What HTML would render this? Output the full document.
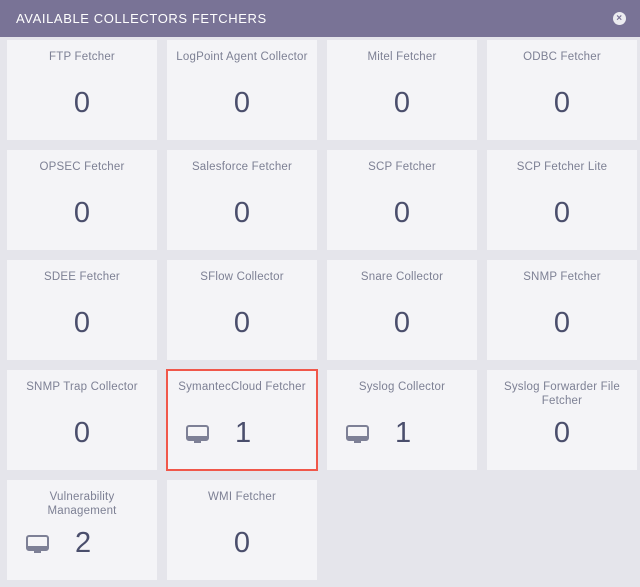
<!DOCTYPE html>
<html><head><meta charset="utf-8"><style>
*{margin:0;padding:0;box-sizing:border-box}
body{width:640px;height:587px;overflow:hidden;background:#e5e5eb;font-family:"Liberation Sans",sans-serif;position:relative}
.hd{position:absolute;left:0;top:0;width:640px;height:37px;background:#797396;color:#fff;font-size:13px;letter-spacing:.6px;padding:11px 0 0 16px}
.x{position:absolute;right:14px;top:12px;width:13px;height:13px;border-radius:50%;background:#ececf0;color:#797396;font-size:10px;font-weight:bold;text-align:center;line-height:13px}
.c{position:absolute;width:150px;height:100px;background:#f4f4f7}
.t{position:absolute;top:10px;left:12px;right:12px;text-align:center;color:#7d8094;font-size:11.5px;line-height:14px;letter-spacing:.2px}
.n{position:absolute;top:47px;left:0;right:0;text-align:center;color:#4a4e6c;font-size:29px}
.n.i{left:68px;right:auto}
.ic{position:absolute;left:19px;top:55px;width:24px;height:20px}
.sel{outline:2px solid #f0574a;outline-offset:-1px}
</style></head><body>
<div class="hd">AVAILABLE COLLECTORS FETCHERS<div class="x">×</div></div>
<svg width="0" height="0" style="position:absolute"><defs><g id="m"><rect x="1" y="1" width="21" height="14" rx="2" fill="none" stroke="#7d8096" stroke-width="2"/><rect x="1" y="11" width="21" height="4" fill="#7d8096"/><rect x="8" y="15" width="7" height="3" fill="#7d8096"/></g></defs></svg>

<div class="c" style="left:7px;top:40px"><div class="t">FTP Fetcher</div><div class="n">0</div></div>
<div class="c" style="left:167px;top:40px"><div class="t" style="left:4px;right:4px">LogPoint Agent Collector</div><div class="n">0</div></div>
<div class="c" style="left:327px;top:40px"><div class="t">Mitel Fetcher</div><div class="n">0</div></div>
<div class="c" style="left:487px;top:40px"><div class="t">ODBC Fetcher</div><div class="n">0</div></div>

<div class="c" style="left:7px;top:150px"><div class="t">OPSEC Fetcher</div><div class="n">0</div></div>
<div class="c" style="left:167px;top:150px"><div class="t">Salesforce Fetcher</div><div class="n">0</div></div>
<div class="c" style="left:327px;top:150px"><div class="t">SCP Fetcher</div><div class="n">0</div></div>
<div class="c" style="left:487px;top:150px"><div class="t">SCP Fetcher Lite</div><div class="n">0</div></div>

<div class="c" style="left:7px;top:260px"><div class="t">SDEE Fetcher</div><div class="n">0</div></div>
<div class="c" style="left:167px;top:260px"><div class="t">SFlow Collector</div><div class="n">0</div></div>
<div class="c" style="left:327px;top:260px"><div class="t">Snare Collector</div><div class="n">0</div></div>
<div class="c" style="left:487px;top:260px"><div class="t">SNMP Fetcher</div><div class="n">0</div></div>

<div class="c" style="left:7px;top:370px"><div class="t">SNMP Trap Collector</div><div class="n">0</div></div>
<div class="c sel" style="left:167px;top:370px"><div class="t" style="left:4px;right:4px">SymantecCloud Fetcher</div><svg class="ic"><use href="#m"/></svg><div class="n i">1</div></div>
<div class="c" style="left:327px;top:370px"><div class="t">Syslog Collector</div><svg class="ic"><use href="#m"/></svg><div class="n i">1</div></div>
<div class="c" style="left:487px;top:370px"><div class="t" style="left:14px;right:14px">Syslog Forwarder File Fetcher</div><div class="n">0</div></div>

<div class="c" style="left:7px;top:480px"><div class="t" style="left:30px;right:30px">Vulnerability Management</div><svg class="ic"><use href="#m"/></svg><div class="n i">2</div></div>
<div class="c" style="left:167px;top:480px"><div class="t">WMI Fetcher</div><div class="n">0</div></div>
</body></html>
